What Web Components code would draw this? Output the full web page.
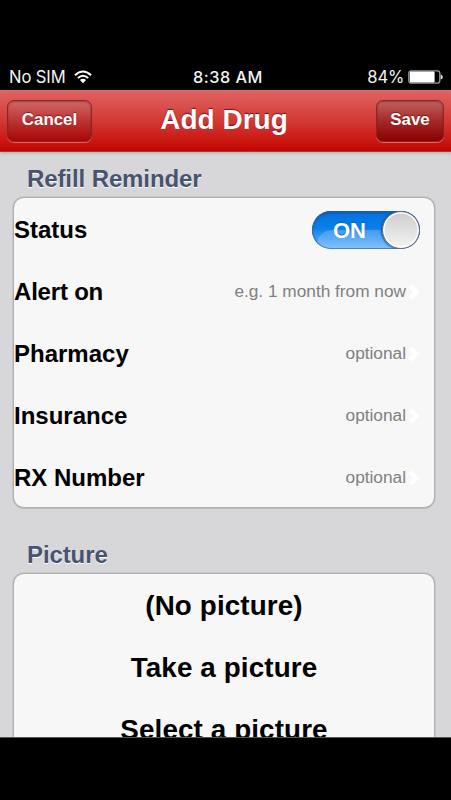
<!DOCTYPE html>
<html lang="en">
<head>
<meta charset="utf-8">
<title>Add Drug</title>
<style>
html,body{margin:0;background:#000;height:800px;overflow:hidden}
body{font-family:"Liberation Sans",Arial,sans-serif}
</style>
</head>
<body>
<drug-app></drug-app>
<script>
const define=(name,html,setup)=>customElements.define(name,class extends HTMLElement{
  constructor(){
    super();
    this.attachShadow({mode:"open"}).innerHTML=html;
  }
  connectedCallback(){ if(setup) setup(this); }
});

define("status-bar",`<style>
:host{display:grid;grid-template-columns:1fr auto 1fr;align-items:center;height:26px;padding:64px 8px 0 9px;background:#000;color:#f4f4f4;font:400 16.6px/26px Inter,sans-serif}
.l,.r{display:flex;align-items:center}
.r{justify-content:flex-end}
.l svg{margin-left:8px;margin-bottom:1px}.r svg{margin-left:4px;margin-bottom:1px}
.t{font-weight:500;font-size:16.3px;letter-spacing:.5px;padding-left:4px}
.l span{letter-spacing:-.1px}
.c{letter-spacing:-.2px}
</style>
<div class="l"><span>No SIM</span><svg width="18" height="14" viewBox="0 0 18 14" fill="none" stroke="#fff" stroke-width="2.1"><path d="M1 5.2Q9-2.2 17 5.2"/><path d="M3.9 8.1Q9 3.4 14.1 8.1"/><path d="M5.9 10.1Q9 7.5 12.1 10.1L9 13.2Z" fill="#fff" stroke="none"/></svg></div>
<div class="t">8:38 AM</div>
<div class="r"><span class="c">84%</span><svg width="35" height="14" viewBox="0 0 35 14"><rect x=".8" y=".8" width="31" height="12.4" rx="2.5" fill="#000" stroke="#999" stroke-width="1.3"/><rect x="1.8" y="1.6" width="24.8" height="10.8" rx="1" fill="#fff"/><path d="M32.6 4.5Q34.8 5 34.8 7T32.6 9.5Z" fill="#ddd"/></svg></div>`);

define("bar-button",`<style>
:host{display:block;box-sizing:border-box;width:85px;height:42px;border:1px solid #8b2525;border-radius:7px;text-align:center;color:#fff;font-weight:bold;font-size:16.9px;line-height:38px;text-shadow:0 -1px 1px #6009;background:linear-gradient(#d16767,#bd3333 50%,#a90606);box-shadow:0 1px 0 #e06060,inset 0 1px 2px #6b151577}
:host([primary]){width:68px;background:linear-gradient(#c26262,#a42828 50%,#8b0000)}
</style><slot></slot>`);

define("nav-bar",`<style>
:host{display:flex;box-sizing:border-box;height:62px;padding:0 7px;align-items:center;justify-content:space-between;background:linear-gradient(#e06b69 0,#de605e 5%,#d23a36 50%,#c70a04 96%,#ad0904);border-bottom:1px solid #a83a39;box-shadow:0 1px 3px #8889;position:relative}
h1{position:absolute;left:0;right:3px;top:0;margin:0;text-align:center;color:#fff;font-size:28px;line-height:60px;text-shadow:0 -1px 1px #701010;pointer-events:none}
</style><slot name="left"></slot><h1><slot></slot></h1><slot name="right"></slot>`);

define("form-section",`<style>
:host{display:block;padding:0 16px 0 13px}
h2{margin:0;padding-left:14px;font-size:24px;line-height:32px;letter-spacing:-.1px;color:#48536f;text-shadow:0 1px 0 #fff}
.card{box-sizing:border-box;margin-top:2px;border:1px solid #aeaeb1;border-radius:11px;background:#f7f7f7;height:311px;padding-top:1px;box-shadow:0 0 0 .5px #b8b8bb,0 1px 0 #c0c0c2}
</style><h2></h2><div class="card"><slot></slot></div>`,
el=>el.shadowRoot.querySelector("h2").textContent=el.getAttribute("heading"));

define("form-row",`<style>
:host{display:flex;height:62px;align-items:center;justify-content:space-between;padding-right:14px;color:#000}
b{font-size:24px;line-height:30px;white-space:nowrap;letter-spacing:var(--track,0)}
.v{display:flex;align-items:center;color:#808080;font-size:17.25px}
.v span{padding-bottom:2px}
svg{margin-left:1px}
</style><b><slot></slot></b><span class="v"></span>`,
el=>{
  const v=el.getAttribute("value");
  if(v) el.shadowRoot.querySelector(".v").innerHTML='<span>'+v+'</span><svg width="13" height="18" viewBox="0 0 13 18"><path d="M3 3l6.5 6L3 15" fill="none" stroke="#fff" stroke-width="4.6"/></svg>';
  else el.shadowRoot.querySelector(".v").innerHTML='<toggle-switch></toggle-switch>';
});

define("toggle-switch",`<style>
:host{display:flex;box-sizing:border-box;width:108px;height:38px;border-radius:19px;align-items:center;justify-content:space-between;position:relative;overflow:hidden;background:linear-gradient(#0870d8,#087feb 45%,#2b90f0 60%,#74bbfa);box-shadow:inset 0 2px 3px #0249a299,inset 0 0 0 1px #3e73ad}
:host::before{content:"";position:absolute;left:5px;top:19px;width:90px;height:30px;border-radius:16px;background:linear-gradient(#ffffff30,#ffffff10)}
b{position:relative;padding:2px 0 0 21px;color:#fff;font-size:22px;line-height:36px;letter-spacing:0;text-shadow:0 -1px 1px #1260b5}
i{position:relative;box-sizing:border-box;width:38px;height:38px;border-radius:50%;border:1.3px solid #6c6c70;background:linear-gradient(#cdcdcd,#f3f3f3);box-shadow:inset 0 0 0 1.5px #fff,-1px 0 2px #0754a5}
</style><b>ON</b><i></i>`);

define("action-row",`<style>
:host{display:block;height:62px;text-align:center;font-weight:bold;font-size:27.8px;line-height:61px;color:#000;letter-spacing:.12px}
</style><slot></slot>`);

define("drug-app",`<style>
:host{display:block;width:451px;height:800px;background:#000;overflow:hidden}
main{height:585px;overflow:hidden;background:#d7d7d9;border-bottom:1px solid #555}
.gap{height:11px}.gap2{height:31px}
</style>
<status-bar></status-bar>
<nav-bar><bar-button slot="left">Cancel</bar-button>Add Drug<bar-button slot="right" primary>Save</bar-button></nav-bar>
<main><div class="gap"></div>
<form-section heading="Refill Reminder">
<form-row>Status</form-row>
<form-row value="e.g. 1 month from now" style="--track:-.2px">Alert on</form-row>
<form-row value="optional">Pharmacy</form-row>
<form-row value="optional">Insurance</form-row>
<form-row value="optional">RX Number</form-row>
</form-section>
<div class="gap2"></div>
<form-section heading="Picture">
<action-row>(No picture)</action-row>
<action-row>Take a picture</action-row>
<action-row>Select a picture</action-row>
</form-section></main>`);
</script>
</body>
</html>
